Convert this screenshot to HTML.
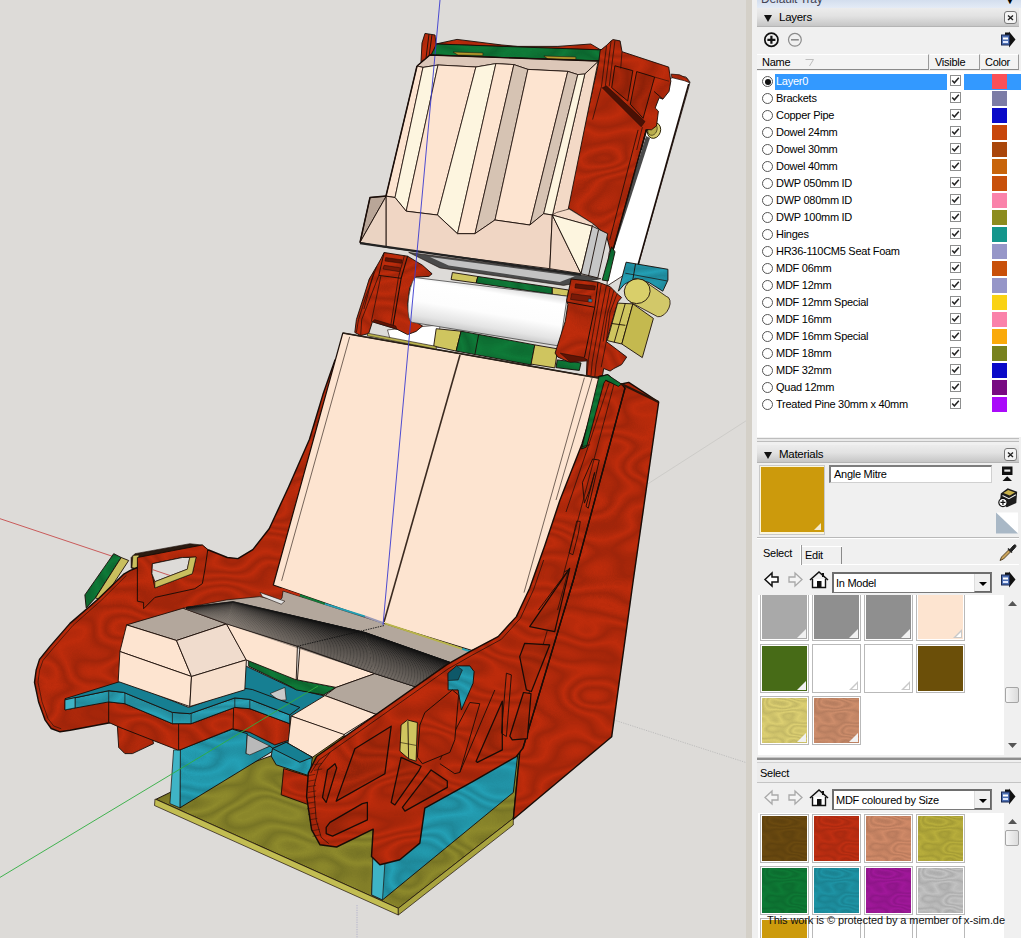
<!DOCTYPE html>
<html><head><meta charset="utf-8"><title>SketchUp</title>
<style>
html,body{margin:0;padding:0;}
body{width:1021px;height:938px;overflow:hidden;position:relative;background:#dddbd8;font-family:"Liberation Sans",sans-serif;font-size:11px;color:#000;}
#vp{position:absolute;left:0;top:0;width:752px;height:938px;display:block}
#split{position:absolute;left:746px;top:0;width:6px;height:938px;background:#d4d0c8}
#split2{position:absolute;left:752px;top:0;width:5px;height:938px;background:#f0f0f0}
#panel{letter-spacing:-.27px;position:absolute;left:757px;top:0;width:264px;height:938px;background:#f0f0f0;overflow:hidden}
#panel *{box-sizing:border-box}
.abs{position:absolute}
.tray{left:0;top:0;width:264px;height:8px;background:linear-gradient(#d3deee,#e4ebf6);overflow:hidden}
.hdr{left:0;width:262px;height:19px;background:linear-gradient(#ececec 0%,#e2e2e2 45%,#c6c6c6 100%);border-bottom:1px solid #b4b4b4}
.hdr span{position:absolute;left:22px;top:3px;font-size:11.5px;}
.hdr b{position:absolute;left:7px;top:7px;width:0;height:0;border-left:4.5px solid transparent;border-right:4.5px solid transparent;border-top:7px solid #111}
.xbtn{position:absolute;left:247px;top:3px;width:13px;height:13px;border:1px solid #777;border-radius:3px;background:#f4f4f4}
.xbtn svg{position:absolute;left:2px;top:2px}
.colh{top:54px;height:16px;background:#f3f3f3;border-top:1px solid #fff;border-bottom:1px solid #8a8a8a;border-right:1px solid #9a9a9a}
.colh span{position:absolute;top:1px;left:5px}
#list{left:0px;top:71px;width:264px;height:366px;background:#fff;overflow:hidden}
.row{position:absolute;left:0;width:264px;height:17px}
.row .hl{position:absolute;left:18px;top:1px;width:246px;height:16px;background:#3399ff}
.row .rad{position:absolute;left:5px;top:3px;width:11px;height:11px;border:1px solid #555;border-radius:50%;background:#fff}
.row .rad.on::after{content:"";position:absolute;left:1.5px;top:1.5px;width:6px;height:6px;border-radius:50%;background:#111}
.row .nm{position:absolute;left:19px;top:2px;white-space:nowrap;}
.row .nm.sel{color:#fff}
.row .cb{position:absolute;left:193px;top:2px;width:11px;height:11px;border:1px solid #8e8f8f;background:#fff;box-shadow:0 0 0 3px #fff}
.row .cb svg{position:absolute;left:-1px;top:-1px}
.row .sw{position:absolute;left:235px;top:1px;width:15px;height:15px}
.swl{background:#fff}
.sws{position:absolute;width:49px;height:49px;border:1px solid #b9b9b9;background:#fff;padding:0}
.sws i{position:absolute;left:1px;top:1px;right:1px;bottom:1px;display:block}
.sws u{position:absolute;right:2px;bottom:2px;width:0;height:0;border-left:9px solid transparent;border-bottom:9px solid #f1f1f1}
.sws u.o{border-bottom-color:#c9c9c9}
.sws u.o::after{content:"";position:absolute;left:-6px;top:3px;width:0;height:0;border-left:5px solid transparent;border-bottom:5px solid #fff}
.dd{background:#fff;border:1px solid #7a7a7a;border-top:2px solid #6e6e6e;border-left:2px solid #6e6e6e}
.dd span{position:absolute;left:2px;top:3px;white-space:nowrap;}
.dd em{position:absolute;right:0;top:0;width:17px;bottom:0;background:#f0f0f0;border-right:1px solid #666;border-bottom:1px solid #666;border-left:1px solid #ddd}
.dd em::after{content:"";position:absolute;left:4px;top:8px;border-left:4px solid transparent;border-right:4px solid transparent;border-top:4px solid #000}
.sb{background:#f0f0f0}
.thumb{position:absolute;left:1px;width:14px;border:1px solid #a5a5a5;border-radius:2px;background:linear-gradient(90deg,#f6f6f6,#dcdcdc)}
</style></head><body>
<svg id="vp" width="752" height="938" viewBox="0 0 752 938">
<rect width="752" height="938" fill="#dddbd8"/>
<defs><filter id="wood" x="-10%" y="-10%" width="120%" height="120%" color-interpolation-filters="sRGB">
<feTurbulence type="fractalNoise" baseFrequency="0.011 0.019" numOctaves="2" seed="11" result="n"/>
<feComponentTransfer in="n" result="b"><feFuncR type="table" tableValues="0 0.16 0 0.16 0 0.16 0 0.16 0 0.16 0 0.16 0 0.16 0 0.16"/></feComponentTransfer>
<feColorMatrix in="b" type="matrix" values="0 0 0 0 0  0 0 0 0 0  0 0 0 0 0  1 0 0 0 0" result="d"/>
<feComposite in="d" in2="SourceAlpha" operator="in" result="dd"/>
<feMerge><feMergeNode in="SourceGraphic"/><feMergeNode in="dd"/></feMerge>
</filter>
<filter id="woods" x="0" y="0" width="100%" height="100%" color-interpolation-filters="sRGB">
<feTurbulence type="fractalNoise" baseFrequency="0.03 0.05" numOctaves="2" seed="5" result="n"/>
<feComponentTransfer in="n" result="b"><feFuncR type="table" tableValues="0 0.11 0 0.11 0 0.11 0 0.11 0 0.11 0 0.11 0 0.11 0 0.11"/></feComponentTransfer>
<feColorMatrix in="b" type="matrix" values="0 0 0 0 0  0 0 0 0 0  0 0 0 0 0  1 0 0 0 0" result="d"/>
<feComposite in="d" in2="SourceAlpha" operator="in" result="dd"/>
<feMerge><feMergeNode in="SourceGraphic"/><feMergeNode in="dd"/></feMerge>
</filter></defs>
<polyline points="0,518.7 128,561.5" fill="none" stroke="#c43a3a" stroke-width="0.8" stroke-linejoin="round"/>
<polyline points="645,485.7 752,417" fill="none" stroke="#cbc9c6" stroke-width="0.9" stroke-linejoin="round"/>
<polyline points="614,720 752,764.5" fill="none" stroke="#b5b5b5" stroke-width="0.8" stroke-linejoin="round" stroke-dasharray="1.2 1.2"/>
<polyline points="357,905 357,938" fill="none" stroke="#a9a9c9" stroke-width="0.8" stroke-linejoin="round" stroke-dasharray="1.2 1.2"/>
<polygon points="656,100 668,80 676,75.5 686,77 690,82 688.5,88 638,266 607,286 609,253" fill="#ffffff" stroke="#1a0d08" stroke-width="0.8" stroke-linejoin="round"/>
<polygon points="436.0,44.0 457.0,39.4 501.9,45.0 517.9,46.4 557.9,46.4 590.8,44.0 599.8,49.4 604.8,50.4" fill="#be2c0c" stroke="#1a0d08" stroke-width="0.9" stroke-linejoin="round" filter="url(#wood)"/>
<polygon points="436.0,44.0 604.8,50.0 598.8,61.0 431.0,55.0" fill="#0f7a38" stroke="#1a0d08" stroke-width="0.9" stroke-linejoin="round" filter="url(#wood)"/>
<polygon points="453.0,52.0 482.9,53.0 482.9,55.4 458.0,55.0" fill="#b59a2c" stroke="#1a0d08" stroke-width="0.5" stroke-linejoin="round"/>
<polygon points="543.9,56.0 575.8,57.0 575.8,59.4 547.9,59.0" fill="#b59a2c" stroke="#1a0d08" stroke-width="0.5" stroke-linejoin="round"/>
<polygon points="425.0,33.4 435.0,35.0 436.0,45.0 431.0,55.0 421.0,62.0 422.0,43.0" fill="#be2c0c" stroke="#1a0d08" stroke-width="0.9" stroke-linejoin="round" filter="url(#wood)"/>
<polyline points="429.0,34.0 426.0,58.0" fill="none" stroke="#1a0d08" stroke-width="0.9" stroke-linejoin="round"/>
<polyline points="432.0,34.6 429.0,56.6" fill="none" stroke="#1a0d08" stroke-width="0.9" stroke-linejoin="round"/>
<polygon points="671.2,74.1 679.5,74.8 687.2,78.6 689.5,82.7 684.7,80.8 671.9,77.6" fill="#be2c0c" stroke="#1a0d08" stroke-width="0.7" stroke-linejoin="round" filter="url(#wood)"/>
<polyline points="688.7,84 638,265" fill="none" stroke="#1a0d08" stroke-width="1.5" stroke-linejoin="round"/>
<ellipse cx="654" cy="130.5" rx="6.5" ry="8" transform="rotate(20 654 130.5)" fill="#d4c96a" stroke="#2a2208" stroke-width="0.9"/>
<ellipse cx="652.5" cy="129.5" rx="4.5" ry="6" transform="rotate(20 652.5 129.5)" fill="#b9ad4c" stroke="#2a2208" stroke-width="0.6"/>
<polygon points="646,136 650,138 613.1,252 611,250" fill="#4a4a4a"/>
<polygon points="598.8,61.6 600.2,50.5 606.6,45.3 611.1,40.9 613.0,39.6 620.1,40.9 622.0,51.7 668.7,67.1 670.8,81.2 669.0,91.4 662.9,99.1 659.1,97.8 655.2,108.0 658.4,111.2 656.5,125.9 651.4,129.8 646.3,129.5 613.1,249.8 610.8,252.1 606.4,235.5 593.1,223.8 569.1,208.5 565.5,213.1" fill="#be2c0c" stroke="#1a0d08" stroke-width="0.9" stroke-linejoin="round" filter="url(#wood)"/>
<polygon points="614.9,65.8 632.8,70.7 627.7,101.0 611.7,87.6" fill="#a8270a" stroke="#1a0d08" stroke-width="0.9" stroke-linejoin="round" filter="url(#wood)"/>
<polygon points="636.7,71.6 654.6,77.1 643.1,118.3 630.3,104.2" fill="#a8270a" stroke="#1a0d08" stroke-width="0.9" stroke-linejoin="round" filter="url(#wood)"/>
<polygon points="602.2,87.8 606.6,86.0 645.0,121.5 641.2,126.8" fill="#4a1004" stroke="#1a0d08" stroke-width="0.6" stroke-linejoin="round"/>
<polyline points="606.6,45.3 601.5,86.3 592.6,119.5" fill="none" stroke="#1a0d08" stroke-width="0.7" stroke-linejoin="round"/>
<polyline points="611.1,40.9 605.3,86.3" fill="none" stroke="#1a0d08" stroke-width="0.7" stroke-linejoin="round"/>
<polyline points="614.9,40.9 609.2,86.3" fill="none" stroke="#1a0d08" stroke-width="0.7" stroke-linejoin="round"/>
<polyline points="622.0,51.7 620.7,68.4" fill="none" stroke="#1a0d08" stroke-width="0.7" stroke-linejoin="round"/>
<polyline points="654.0,91.4 662.9,99.1" fill="none" stroke="#1a0d08" stroke-width="0.9" stroke-linejoin="round"/>
<polyline points="654.6,77.1 669.0,81.2" fill="none" stroke="#1a0d08" stroke-width="0.6" stroke-linejoin="round"/>
<polyline points="646.3,129.5 641.2,150.0" fill="none" stroke="#1a0d08" stroke-width="1.2" stroke-linejoin="round"/>
<polyline points="642.4,127.2 636.7,150.0" fill="none" stroke="#1a0d08" stroke-width="0.7" stroke-linejoin="round"/>
<polyline points="638.1,129.9 609.8,239.8" fill="none" stroke="#1a0d08" stroke-width="0.8" stroke-linejoin="round"/>
<polyline points="646.4,129.9 613.1,249.8" fill="none" stroke="#1a0d08" stroke-width="1.4" stroke-linejoin="round"/>
<polygon points="417.0,66.0 430.0,55.0 598.8,61.0 584.8,74.0 577.8,74.6 567.8,71.4 527.9,69.4 513.9,64.6 495.9,63.6 475.9,67.0 438.0,65.0 423.0,67.4" fill="#dcc7b8" stroke="#1a0d08" stroke-width="0.9" stroke-linejoin="round"/>
<polygon points="584.8,74.0 598.1,61.6 568.1,209.8 552.5,215" fill="#f3d9c6" stroke="#1a0d08" stroke-width="0.9" stroke-linejoin="round"/>
<polygon points="417.0,66.0 423.0,67.4 395,197.5 386,196" fill="#fde4d0" stroke="#1a0d08" stroke-width="0.8" stroke-linejoin="round"/>
<polygon points="423.0,67.4 438.0,65.0 406.2,211.2 395,197.5" fill="#fdf5df" stroke="#1a0d08" stroke-width="0.8" stroke-linejoin="round"/>
<polygon points="438.0,65.0 475.9,67.0 437.5,215 406.2,211.2" fill="#fde4d0" stroke="#1a0d08" stroke-width="0.8" stroke-linejoin="round"/>
<polygon points="475.9,67.0 495.9,63.6 457.5,233.7 437.5,215" fill="#fdf5df" stroke="#1a0d08" stroke-width="0.8" stroke-linejoin="round"/>
<polygon points="495.9,63.6 513.9,64.6 475,233.7 457.5,233.7" fill="#fde4d0" stroke="#1a0d08" stroke-width="0.8" stroke-linejoin="round"/>
<polygon points="513.9,64.6 527.9,69.4 495,220 475,233.7" fill="#d6c3b3" stroke="#1a0d08" stroke-width="0.8" stroke-linejoin="round"/>
<polygon points="527.9,69.4 567.8,71.4 530,225 495,220" fill="#fde4d0" stroke="#1a0d08" stroke-width="0.8" stroke-linejoin="round"/>
<polygon points="567.8,71.4 577.8,74.6 543.7,213.7 530,225" fill="#d6c3b3" stroke="#1a0d08" stroke-width="0.8" stroke-linejoin="round"/>
<polygon points="577.8,74.6 584.8,74.0 552.5,215 543.7,213.7" fill="#fdf5df" stroke="#1a0d08" stroke-width="0.8" stroke-linejoin="round"/>
<polygon points="552.3,215 556.5,212.5 569,209 593.5,224 592.3,226.2" fill="#f3d9c6" stroke="#1a0d08" stroke-width="0.6" stroke-linejoin="round"/>
<polygon points="370.0,197.5 386.2,196.2 360.0,242.4" fill="#b9a698" stroke="#1a0d08" stroke-width="0.9" stroke-linejoin="round"/>
<polygon points="386.2,196.2 386.2,247.4 360.0,242.4" fill="#ead3c2" stroke="#1a0d08" stroke-width="0.9" stroke-linejoin="round"/>
<polygon points="386.2,196.2 395.0,197.5 406.2,211.2 437.4,215.0 457.4,233.7 474.9,233.7 494.9,220.0 529.8,225.0 543.6,213.7 552.3,215.0 549.8,268.7 386.2,247.4" fill="#f0d6c4" stroke="#1a0d08" stroke-width="0.9" stroke-linejoin="round"/>
<polygon points="552.3,215.0 549.8,268.7 581.0,273.7" fill="#f0d6c4" stroke="#1a0d08" stroke-width="0.9" stroke-linejoin="round"/>
<polygon points="552.3,215.0 592.3,226.2 581.0,273.7" fill="#fdf5df" stroke="#1a0d08" stroke-width="0.9" stroke-linejoin="round"/>
<polygon points="581.0,273.7 592.3,226.2 607.7,233.7 597.8,277.9" fill="#c6c6c6" stroke="#1a0d08" stroke-width="0.9" stroke-linejoin="round"/>
<polyline points="598.5,230.0 588.5,276.2" fill="none" stroke="#1a0d08" stroke-width="0.9" stroke-linejoin="round"/>
<polygon points="408.7,252.4 581.0,274.9 601.0,278.7 563.5,285.4 439.9,267.9" fill="#4a4a4a" stroke="#1a0d08" stroke-width="0.6" stroke-linejoin="round"/>
<polygon points="429.9,256.9 574.8,276.2 559.8,281.9 448.7,265.4" fill="#c2c2c2"/>
<polyline points="360.0,243.2 581.0,274.7" fill="none" stroke="#222" stroke-width="2.2" stroke-linejoin="round"/>
<polygon points="387.5,329.9 439.9,324.9 438.7,347.4 390.0,338.7" fill="#ffffff" stroke="#1a0d08" stroke-width="0.6" stroke-linejoin="round"/>
<polygon points="452.4,272.5 477.9,276.5 476.1,283.0 451.1,279.5" fill="#cfc55f" stroke="#1a0d08" stroke-width="0.9" stroke-linejoin="round"/>
<polygon points="477.9,276.5 552.3,287.5 552.3,294.2 476.1,283.0" fill="#0f7a38" stroke="#1a0d08" stroke-width="0.9" stroke-linejoin="round" filter="url(#wood)"/>
<polygon points="552.3,287.5 568.5,290.0 567.8,296.4 552.3,294.2" fill="#cfc55f" stroke="#1a0d08" stroke-width="0.9" stroke-linejoin="round"/>
<polygon points="436.2,328.7 461.1,331.2 456.1,351.1 433.7,346.1" fill="#cfc55f" stroke="#1a0d08" stroke-width="0.9" stroke-linejoin="round"/>
<polygon points="461.1,331.2 534.8,344.9 531.1,364.9 456.1,351.1" fill="#0f7a38" stroke="#1a0d08" stroke-width="0.9" stroke-linejoin="round" filter="url(#wood)"/>
<polyline points="478.6,334.9 474.9,354.4" fill="none" stroke="#1a0d08" stroke-width="0.9" stroke-linejoin="round"/>
<polygon points="534.8,344.9 557.8,348.9 554.8,367.9 531.1,364.1" fill="#cfc55f" stroke="#1a0d08" stroke-width="0.9" stroke-linejoin="round"/>
<polygon points="557.3,359.9 581.0,362.9 579.3,370.4 556.0,367.6" fill="#0f7a38" stroke="#1a0d08" stroke-width="0.9" stroke-linejoin="round" filter="url(#wood)"/>
<polygon points="384.1,252.5 407.6,256.2 422.5,265.3 432.1,273.8 428.9,276.4 416.1,277.0 409.7,287.6 407.6,304.7 409.7,318.6 422.5,326.0 416.1,331.4 407.6,334.6 396.9,329.2 372.4,321.8 368.7,333.5 360.7,335.6 354.8,332.4 356.4,319.6 363.9,296.2 369.2,279.1 376.7,266.3 380.9,258.9" fill="#be2c0c" stroke="#1a0d08" stroke-width="0.9" stroke-linejoin="round" filter="url(#wood)"/>
<polyline points="407.6,256.2 401.2,278.0 392.6,328.2" fill="none" stroke="#1a0d08" stroke-width="1.1" stroke-linejoin="round"/>
<polyline points="404.4,255.7 398.5,277.0 390.5,327.1" fill="none" stroke="#1a0d08" stroke-width="0.7" stroke-linejoin="round"/>
<polyline points="384.1,252.5 378.8,275.4 401.2,278.3" fill="none" stroke="#1a0d08" stroke-width="0.9" stroke-linejoin="round"/>
<polyline points="378.8,275.4 361.7,319.6 360.7,335.6" fill="none" stroke="#1a0d08" stroke-width="0.7" stroke-linejoin="round"/>
<polyline points="380.9,275.9 371.3,321.8" fill="none" stroke="#1a0d08" stroke-width="0.7" stroke-linejoin="round"/>
<polyline points="376.7,266.3 366.0,296.2 358.5,319.6 356.4,332.4" fill="none" stroke="#1a0d08" stroke-width="0.7" stroke-linejoin="round"/>
<polyline points="374.0,271.7 363.9,309.0" fill="none" stroke="#1a0d08" stroke-width="0.7" stroke-linejoin="round"/>
<polygon points="385.7,257.6 402.2,259.9 401.4,263.3 385.0,261.0" fill="#5e1405" stroke="#1a0d08" stroke-width="0.5" stroke-linejoin="round"/>
<polygon points="384.1,265.3 400.6,267.9 399.6,271.7 383.0,269.0" fill="#7a1a07" stroke="#1a0d08" stroke-width="0.5" stroke-linejoin="round"/>
<polygon points="372.4,321.8 396.9,329.2 395.8,326.0 374.5,319.6" fill="#5e1405" stroke="#1a0d08" stroke-width="0.5" stroke-linejoin="round"/>
<defs><linearGradient id="cyl" gradientUnits="userSpaceOnUse" x1="492" y1="287" x2="484" y2="334"><stop offset="0" stop-color="#e6e6e6"/><stop offset="0.12" stop-color="#ffffff"/><stop offset="0.55" stop-color="#fdfdfd"/><stop offset="0.85" stop-color="#e4e4e4"/><stop offset="1" stop-color="#c9c9c9"/></linearGradient></defs>
<path d="M414.9,277.5 L567.3,296.2 L559.8,346.1 L412.4,322.4 A6.4,23.5 7 0 1 414.9,277.5Z" fill="url(#cyl)" stroke="#333" stroke-width="0.7"/>
<polygon points="615.0,251.9 608.2,280.9 602.2,280.1 611.6,246.8" fill="#0f7a38" stroke="#1a0d08" stroke-width="0.9" stroke-linejoin="round" filter="url(#wood)"/>
<polygon points="626.1,262.2 667.9,269.3 667.9,280.1 662.8,291.2 649.1,282.6 635.5,278.4 624.4,284.3 618.4,291.2" fill="#24a0b5" stroke="#1a0d08" stroke-width="0.9" stroke-linejoin="round" filter="url(#wood)"/>
<polyline points="635.5,263.9 632.9,279.2" fill="none" stroke="#1a0d08" stroke-width="0.9" stroke-linejoin="round"/>
<polyline points="625.3,273.2 667.0,280.9" fill="none" stroke="#1a0d08" stroke-width="0.7" stroke-linejoin="round"/>
<polygon points="571.1,279.0 598.0,282.1 610.1,286.6 617.1,293.7 621.6,297.5 617.8,302.0 614.8,312.2 610.4,327.5 606.3,341.6 626.7,357.0 621.6,364.6 613.9,368.5 610.1,371.0 603.7,368.5 602.4,376.1 593.5,377.4 586.4,374.9 587.1,359.5 569.2,362.1 557.7,357.0 555.1,353.1 565.3,321.2 567.9,304.5 566.6,300.7" fill="#be2c0c" stroke="#1a0d08" stroke-width="0.9" stroke-linejoin="round" filter="url(#wood)"/>
<polyline points="566.6,302.0 594.8,307.3 598.0,282.1" fill="none" stroke="#1a0d08" stroke-width="1.0" stroke-linejoin="round"/>
<polyline points="594.8,307.3 584.5,357.0" fill="none" stroke="#1a0d08" stroke-width="1.0" stroke-linejoin="round"/>
<polyline points="601.2,284.1 597.3,308.4 588.4,359.5 587.1,374.9" fill="none" stroke="#1a0d08" stroke-width="0.7" stroke-linejoin="round"/>
<polyline points="606.3,286.0 601.2,312.2 592.2,362.1 590.9,376.1" fill="none" stroke="#1a0d08" stroke-width="0.7" stroke-linejoin="round"/>
<polyline points="610.1,287.9 605.0,314.8 596.0,364.6 594.8,376.8" fill="none" stroke="#1a0d08" stroke-width="0.7" stroke-linejoin="round"/>
<polyline points="617.1,293.7 610.1,312.2 606.3,341.6 601.2,367.2" fill="none" stroke="#1a0d08" stroke-width="0.7" stroke-linejoin="round"/>
<polyline points="613.9,290.5 607.5,313.5 603.1,341.6" fill="none" stroke="#1a0d08" stroke-width="0.7" stroke-linejoin="round"/>
<polygon points="575.6,283.8 595.4,286.0 594.8,290.1 574.9,287.9" fill="#5e1405" stroke="#1a0d08" stroke-width="0.5" stroke-linejoin="round"/>
<polygon points="571.7,293.7 590.9,296.2 590.3,302.0 570.5,299.4" fill="#7a1a07" stroke="#1a0d08" stroke-width="0.5" stroke-linejoin="round"/>
<polygon points="588.4,298.8 592.2,299.2 591.9,302.2 588.1,301.8" fill="#3a7a9a" stroke="#1a0d08" stroke-width="0.4" stroke-linejoin="round"/>
<polygon points="560.2,353.1 584.5,357.6 587.1,361.0 570.5,362.3" fill="#5e1405" stroke="#1a0d08" stroke-width="0.5" stroke-linejoin="round"/>
<polygon points="617.6,303.1 632.9,303.9 621.8,344.0 607.3,340.6" fill="#cfc55f" stroke="#1a0d08" stroke-width="0.9" stroke-linejoin="round"/>
<polygon points="632.9,303.9 653.4,318.4 642.3,357.6 621.8,344.0" fill="#c4b94f" stroke="#1a0d08" stroke-width="0.9" stroke-linejoin="round"/>
<polyline points="625.3,303.4 614.2,342.3" fill="none" stroke="#1a0d08" stroke-width="0.9" stroke-linejoin="round"/>
<polyline points="611.6,323.5 625.3,325.3" fill="none" stroke="#1a0d08" stroke-width="0.9" stroke-linejoin="round"/>
<path d="M642.3,279.6 L666.2,296.3 A7,11.2 30 0 1 657.6,316.7 L630.4,302.2 Z" fill="#d2c869" stroke="#1a0d08" stroke-width="0.8"/>
<ellipse cx="637.2" cy="291.2" rx="13" ry="12.3" transform="rotate(-20 637.2 291.2)" fill="#d9cf6a" stroke="#1a0d08" stroke-width="0.8"/>
<polygon points="598.8,376.4 608.2,374.7 615.0,381.5 601.4,399.9 594.6,399.9" fill="#0f7a38" stroke="#1a0d08" stroke-width="0.9" stroke-linejoin="round" filter="url(#wood)"/>
<polygon points="598.8,376.4 608.2,374.7 615,381.5 582,446 578,444" fill="#0f7a38" stroke="#1a0d08" stroke-width="0.9" stroke-linejoin="round" filter="url(#wood)"/>
<polygon points="84.9,594.9 113.7,553.7 121.2,557.5 95.4,597.9 86.2,607.9" fill="#0f7a38" stroke="#1a0d08" stroke-width="0.9" stroke-linejoin="round" filter="url(#wood)"/>
<polygon points="121.2,557.5 128.7,560.5 102.4,600.4 95.4,597.9" fill="#c9bf5e" stroke="#1a0d08" stroke-width="0.9" stroke-linejoin="round"/>
<polygon points="131.1,557.5 134.9,553.7 189.8,543.7 202.3,545.0 207.8,549.5 137.4,560.0 136.9,570.0 131.1,568.0" fill="#2a1a10" stroke="#1a0d08" stroke-width="0.6" stroke-linejoin="round"/>
<polygon points="132.9,555.5 138.9,555.0 137.9,569.0 131.9,567.5" fill="#c9bf5e" stroke="#1a0d08" stroke-width="0.6" stroke-linejoin="round"/>
<polygon points="335,360 322.9,394.6 309.5,439.3 288.6,487 269.2,528.8 252.8,549.6 237.9,558.6 227.3,557.5 208.6,550.0 137.4,567.5 129.9,570.7 123.4,574.4 97.9,599.2 70.0,623.4 50.0,646.4 39.5,659.4 36.2,669.9 34.5,682.3 38.7,702.3 45.0,719.8 51.2,728.5 60.0,731.8 70.0,730.3 109.9,722.8 112.4,694.8 179.9,669.9 300,610 360,345" fill="#be2c0c" stroke="#1a0d08" stroke-width="1.4" stroke-linejoin="round" filter="url(#wood)"/>
<polyline points="126.4,575.4 100.9,600.7 73.0,625.4 53.0,648.4 43.0,660.4 39.5,670.3 38.0,682.3 42.0,701.8 48.0,718.6 53.7,726.0 61.2,728.8" fill="none" stroke="#1a0d08" stroke-width="0.6" stroke-linejoin="round"/>
<path fill-rule="evenodd" fill="#be2c0c" filter="url(#wood)" stroke="#1a0d08" stroke-width="0.9" stroke-linejoin="round" d="M137.4,557.5 L202.3,545.0 L207.8,549.5 L204.8,570.0 L202.3,583.7 L194.8,588.7 L154.9,597.4 L143.6,608.7 L143.6,602.4 L137.4,601.2 Z M152.4,563.7 L182.3,557.5 L196.1,557.0 L192.3,573.7 L154.9,587.9 L151.9,573.7 Z"/>
<polygon points="152.4,563.7 182.3,557.5 189.8,557.5 187.3,569.2 154.9,581.7 151.9,573.7" fill="#dddbd8" stroke="#1a0d08" stroke-width="0.8" stroke-linejoin="round"/>
<polyline points="152.5,569.6 170,575.5" fill="none" stroke="#c43a3a" stroke-width="0.8" stroke-linejoin="round"/>
<polygon points="189.8,557.5 196.1,557.0 192.3,573.7 154.9,587.9 154.9,581.7 187.3,569.2" fill="#c9bf5e" stroke="#1a0d08" stroke-width="0.6" stroke-linejoin="round"/>
<polygon points="342.8,333 598.3,378 604,379 585,445 563,501 548,546 540,562 530,595 517,621 497,640 472,650.5 383.2,623.3 273.3,585" fill="#fde4d0" stroke="#1a0d08" stroke-width="1.2" stroke-linejoin="round"/>
<polyline points="460,355 384,622" fill="none" stroke="#3a2a20" stroke-width="1.6" stroke-linejoin="round"/>
<polyline points="342.8,333 598.3,378" fill="none" stroke="#2a2018" stroke-width="1.6" stroke-linejoin="round"/>
<polygon points="367.5,333.2 436.2,346.4 436.2,349.1 367.5,335.9" fill="#b9b24e" stroke="#1a0d08" stroke-width="0.6" stroke-linejoin="round"/>
<polyline points="349.7,336.8 281.6,580.8" fill="none" stroke="#1a0d08" stroke-width="0.6" stroke-linejoin="round"/>
<polyline points="584.4,377.7 524,592.6" fill="none" stroke="#1a0d08" stroke-width="0.6" stroke-linejoin="round"/>
<polyline points="592,378 556,500" fill="none" stroke="#1a0d08" stroke-width="0.6" stroke-linejoin="round"/>
<polygon points="156,799.3 175,790 330,735 520,750 513.3,818.3 398.3,908.3" fill="#8e8a2c" stroke="#1a0d08" stroke-width="0.9" stroke-linejoin="round" filter="url(#wood)"/>
<polygon points="155,799 398.3,908.3 398.3,915 154.5,805.5" fill="#c2bd52" stroke="#1a0d08" stroke-width="0.7" stroke-linejoin="round"/>
<polygon points="398.3,908.3 513.3,818.3 513.3,825 398.3,915" fill="#a8a33e" stroke="#1a0d08" stroke-width="0.7" stroke-linejoin="round"/>
<polygon points="420,801.7 463.3,773.3 518.3,750 513.3,792.5 382.5,899.9 371.7,894.9 376,800" fill="#24a0b5" stroke="#1a0d08" stroke-width="0.9" stroke-linejoin="round" filter="url(#wood)"/>
<polygon points="374.5,800 389,800 382.5,899.9 371.7,894.9" fill="#3fb4c6" stroke="#1a0d08" stroke-width="0.7" stroke-linejoin="round"/>
<polygon points="225.0,664.9 246.2,666.2 293.7,688.6 324.9,696.1 291.2,717.4 287.4,748.6 272.5,748.6 225.0,777.3" fill="#167f92" stroke="#1a0d08" stroke-width="0.9" stroke-linejoin="round"/>
<polygon points="179.9,749.9 232.3,729.2 247.3,733.7 246.1,753.6 269.8,746.1 274.8,749.9 179.9,807.8" fill="#24a0b5" stroke="#1a0d08" stroke-width="0.9" stroke-linejoin="round" filter="url(#wood)"/>
<polygon points="173.6,749.9 180.4,749.9 179.9,807.8 169.9,803.6" fill="#3fb4c6" stroke="#1a0d08" stroke-width="0.7" stroke-linejoin="round"/>
<polygon points="247.3,734.9 269.8,746.1 249.8,754.9 246.1,753.6" fill="#b9b9b9" stroke="#1a0d08" stroke-width="0.6" stroke-linejoin="round"/>
<polygon points="270.0,693.6 284.9,687.4 286.2,699.9 278.7,700.4" fill="#c9c9c9" stroke="#1a0d08" stroke-width="0.6" stroke-linejoin="round"/>
<polygon points="248.7,657.4 294.9,678.6 297.4,679.9 336.1,687.4 323.7,694.9 296.2,689.9 292.4,687.4 248.7,666.2" fill="#0f7a38" stroke="#1a0d08" stroke-width="0.9" stroke-linejoin="round" filter="url(#wood)"/>
<polygon points="117.4,726.2 118.7,747.4 124.9,753.6 132.4,753.6 153.6,743.6 152.4,738.7" fill="#be2c0c" stroke="#1a0d08" stroke-width="0.9" stroke-linejoin="round" filter="url(#wood)"/>
<polygon points="108.7,701.9 124.9,703.7 172.4,723.7 191.1,723.7 234.8,707.4 249.8,708.7 289.8,723.7 289.8,739.9 274.8,744.9 249.8,732.4 232.3,728.7 179.9,749.9 177.4,749.9 119.9,727.4 108.7,722.4" fill="#be2c0c" stroke="#1a0d08" stroke-width="0.9" stroke-linejoin="round" filter="url(#wood)"/>
<polyline points="178.6,723.7 178.6,749.9" fill="none" stroke="#1a0d08" stroke-width="0.9" stroke-linejoin="round"/>
<polyline points="233.6,707.9 233.1,728.7" fill="none" stroke="#1a0d08" stroke-width="0.9" stroke-linejoin="round"/>
<polygon points="65.0,699.9 108.7,690.7 123.7,692.4 172.4,712.4 189.9,713.7 234.8,697.9 249.8,699.4 289.8,714.9 289.8,723.7 249.8,708.7 234.8,707.4 191.1,723.7 172.4,723.7 124.9,703.7 108.7,701.9 65.0,709.9" fill="#2aa4b8" stroke="#1a0d08" stroke-width="0.9" stroke-linejoin="round" filter="url(#wood)"/>
<polygon points="65.0,698.7 121.2,681.2 129.9,683.7 188.6,707.4 243.6,688.2 252.3,689.5 299.8,707.4 289.8,714.9 249.8,699.4 234.8,697.9 189.9,713.7 172.4,712.4 123.7,692.4 108.7,690.7 65.0,699.9" fill="#167f92" stroke="#1a0d08" stroke-width="0.9" stroke-linejoin="round"/>
<polyline points="75.0,697.4 75.0,707.9" fill="none" stroke="#1a0d08" stroke-width="0.7" stroke-linejoin="round"/>
<polyline points="108.7,690.7 108.7,701.9" fill="none" stroke="#1a0d08" stroke-width="0.7" stroke-linejoin="round"/>
<polyline points="124.9,692.7 124.9,703.9" fill="none" stroke="#1a0d08" stroke-width="0.7" stroke-linejoin="round"/>
<polyline points="172.4,712.7 172.4,723.9" fill="none" stroke="#1a0d08" stroke-width="0.7" stroke-linejoin="round"/>
<polyline points="191.1,713.9 191.1,723.7" fill="none" stroke="#1a0d08" stroke-width="0.7" stroke-linejoin="round"/>
<polyline points="234.8,698.2 234.8,707.4" fill="none" stroke="#1a0d08" stroke-width="0.7" stroke-linejoin="round"/>
<polyline points="249.8,699.7 249.8,708.9" fill="none" stroke="#1a0d08" stroke-width="0.7" stroke-linejoin="round"/>
<polygon points="65.0,699.9 75.0,697.7 75.0,707.9 65.0,709.9" fill="#3fb4c6" stroke="#1a0d08" stroke-width="0.7" stroke-linejoin="round"/>
<polyline points="0,877.4 318,686" fill="none" stroke="#2fae3f" stroke-width="0.9" stroke-linejoin="round"/>
<polygon points="126.6,624.9 183.2,608.2 226.5,623.9 176.5,640.5" fill="#b3a79c" stroke="#1a0d08" stroke-width="0.9" stroke-linejoin="round"/>
<polygon points="126.6,624.9 176.5,640.5 191.5,676.5 119.9,651.5" fill="#fde4d0" stroke="#1a0d08" stroke-width="0.9" stroke-linejoin="round"/>
<polygon points="176.5,640.5 226.5,623.9 246.4,659.8 191.5,676.5" fill="#f0dccd" stroke="#1a0d08" stroke-width="0.9" stroke-linejoin="round"/>
<polygon points="119.9,651.5 191.5,676.5 189.8,706.5 118.2,681.5" fill="#fde4d0" stroke="#1a0d08" stroke-width="0.9" stroke-linejoin="round"/>
<polygon points="191.5,676.5 246.4,659.8 244.8,689.8 189.8,706.5" fill="#f7dfcc" stroke="#1a0d08" stroke-width="0.9" stroke-linejoin="round"/>
<polygon points="226.2,623.4 297.4,646.2 296.2,679.9 246.2,659.9" fill="#fde4d0" stroke="#1a0d08" stroke-width="0.9" stroke-linejoin="round"/>
<polygon points="299.9,647.4 374.9,673.6 336.1,687.4 297.4,679.9" fill="#fde4d0" stroke="#1a0d08" stroke-width="0.9" stroke-linejoin="round"/>
<polygon points="374.9,673.6 417.3,687.4 376.1,714.4 324.9,695.6 336.1,687.4" fill="#b3a79c" stroke="#1a0d08" stroke-width="0.9" stroke-linejoin="round"/>
<polygon points="324.9,695.6 376.1,714.4 343.6,734.8 291.2,716.1" fill="#fde4d0" stroke="#1a0d08" stroke-width="0.9" stroke-linejoin="round"/>
<polygon points="291.2,716.1 344.9,734.8 312.4,757.3 287.4,748.6" fill="#fde4d0" stroke="#1a0d08" stroke-width="0.9" stroke-linejoin="round"/>
<polygon points="272.5,748.6 286.2,742.3 312.4,757.3 309.9,776.0 276.2,764.8 271.2,756.1" fill="#24a0b5" stroke="#1a0d08" stroke-width="0.9" stroke-linejoin="round" filter="url(#wood)"/>
<polygon points="272.5,748.6 286.2,742.3 312.4,757.3 299.9,762.3" fill="#167f92" stroke="#1a0d08" stroke-width="0.9" stroke-linejoin="round"/>
<polygon points="283.7,768.6 309.9,776.8 307.4,804.3 281.2,794.8" fill="#be2c0c" stroke="#1a0d08" stroke-width="0.9" stroke-linejoin="round" filter="url(#wood)"/>
<polygon points="183.2,608.2 226.5,599.9 259.8,596.6 278.7,601.2 282,598 283,591 384.8,623.7 466,649.6 474.8,653.7 447.3,669.9 417.3,687.4 374.9,673.6 297.4,646.2 226.5,623.9" fill="#b3a79c" stroke="#1a0d08" stroke-width="0.7" stroke-linejoin="round"/>
<defs><linearGradient id="hg" gradientUnits="userSpaceOnUse" x1="190" y1="0" x2="330" y2="0"><stop offset="0" stop-color="#111" stop-opacity="0.25"/><stop offset="1" stop-color="#111" stop-opacity="1"/></linearGradient></defs>
<polyline points="186.0,607.4 233.0,601.6 364.9,632.4 452.0,663.0" fill="none" stroke="url(#hg)" stroke-width="0.8" stroke-linejoin="round" stroke-opacity="1.00"/>
<polyline points="186.0,607.4 232.99,601.63 364.91,632.45 451.96,663.03" fill="none" stroke="url(#hg)" stroke-width="0.8" stroke-linejoin="round" stroke-opacity="1.00"/>
<polyline points="186.0,607.4 232.97,601.69 364.94,632.56 451.86,663.1" fill="none" stroke="url(#hg)" stroke-width="0.8" stroke-linejoin="round" stroke-opacity="1.00"/>
<polyline points="186.0,607.41 232.95,601.77 364.98,632.72 451.73,663.19" fill="none" stroke="url(#hg)" stroke-width="0.8" stroke-linejoin="round" stroke-opacity="1.00"/>
<polyline points="186.0,607.42 232.92,601.88 365.03,632.93 451.56,663.31" fill="none" stroke="url(#hg)" stroke-width="0.8" stroke-linejoin="round" stroke-opacity="1.00"/>
<polyline points="186.0,607.42 232.88,602.02 365.09,633.17 451.35,663.46" fill="none" stroke="url(#hg)" stroke-width="0.8" stroke-linejoin="round" stroke-opacity="0.99"/>
<polyline points="186.0,607.43 232.83,602.17 365.15,633.45 451.12,663.62" fill="none" stroke="url(#hg)" stroke-width="0.8" stroke-linejoin="round" stroke-opacity="0.99"/>
<polyline points="186.0,607.44 232.79,602.34 365.23,633.76 450.85,663.81" fill="none" stroke="url(#hg)" stroke-width="0.8" stroke-linejoin="round" stroke-opacity="0.99"/>
<polyline points="186.0,607.45 232.73,602.53 365.31,634.11 450.56,664.01" fill="none" stroke="url(#hg)" stroke-width="0.8" stroke-linejoin="round" stroke-opacity="0.99"/>
<polyline points="186.0,607.46 232.67,602.73 365.41,634.49 450.24,664.24" fill="none" stroke="url(#hg)" stroke-width="0.8" stroke-linejoin="round" stroke-opacity="0.98"/>
<polyline points="186.0,607.47 232.61,602.95 365.51,634.9 449.9,664.48" fill="none" stroke="url(#hg)" stroke-width="0.8" stroke-linejoin="round" stroke-opacity="0.98"/>
<polyline points="186.0,607.49 232.54,603.19 365.61,635.34 449.53,664.74" fill="none" stroke="url(#hg)" stroke-width="0.8" stroke-linejoin="round" stroke-opacity="0.98"/>
<polyline points="186.0,607.5 232.46,603.44 365.73,635.81 449.13,665.02" fill="none" stroke="url(#hg)" stroke-width="0.8" stroke-linejoin="round" stroke-opacity="0.98"/>
<polyline points="186.0,607.51 232.38,603.71 365.85,636.3 448.71,665.31" fill="none" stroke="url(#hg)" stroke-width="0.8" stroke-linejoin="round" stroke-opacity="0.97"/>
<polyline points="186.0,607.53 232.3,604.0 365.97,636.83 448.27,665.62" fill="none" stroke="url(#hg)" stroke-width="0.8" stroke-linejoin="round" stroke-opacity="0.97"/>
<polyline points="186.0,607.54 232.21,604.29 366.11,637.38 447.81,665.95" fill="none" stroke="url(#hg)" stroke-width="0.8" stroke-linejoin="round" stroke-opacity="0.96"/>
<polyline points="186.0,607.56 232.12,604.61 366.25,637.96 447.32,666.29" fill="none" stroke="url(#hg)" stroke-width="0.8" stroke-linejoin="round" stroke-opacity="0.96"/>
<polyline points="186.0,607.58 232.03,604.93 366.39,638.56 446.81,666.65" fill="none" stroke="url(#hg)" stroke-width="0.8" stroke-linejoin="round" stroke-opacity="0.96"/>
<polyline points="186.0,607.6 231.93,605.27 366.55,639.19 446.28,667.02" fill="none" stroke="url(#hg)" stroke-width="0.8" stroke-linejoin="round" stroke-opacity="0.95"/>
<polyline points="186.0,607.62 231.83,605.63 366.71,639.84 445.73,667.41" fill="none" stroke="url(#hg)" stroke-width="0.8" stroke-linejoin="round" stroke-opacity="0.95"/>
<polyline points="186.0,607.64 231.72,605.99 366.87,640.52 445.16,667.81" fill="none" stroke="url(#hg)" stroke-width="0.8" stroke-linejoin="round" stroke-opacity="0.94"/>
<polyline points="186.0,607.66 231.61,606.37 367.04,641.22 444.57,668.22" fill="none" stroke="url(#hg)" stroke-width="0.8" stroke-linejoin="round" stroke-opacity="0.94"/>
<polyline points="186.0,607.68 231.49,606.77 367.22,641.95 443.96,668.65" fill="none" stroke="url(#hg)" stroke-width="0.8" stroke-linejoin="round" stroke-opacity="0.93"/>
<polyline points="186.0,607.7 231.38,607.17 367.4,642.7 443.33,669.1" fill="none" stroke="url(#hg)" stroke-width="0.8" stroke-linejoin="round" stroke-opacity="0.93"/>
<polyline points="186.0,607.72 231.25,607.59 367.59,643.47 442.68,669.55" fill="none" stroke="url(#hg)" stroke-width="0.8" stroke-linejoin="round" stroke-opacity="0.92"/>
<polyline points="186.0,607.75 231.13,608.02 367.78,644.26 442.01,670.03" fill="none" stroke="url(#hg)" stroke-width="0.8" stroke-linejoin="round" stroke-opacity="0.91"/>
<polyline points="186.0,607.77 231.0,608.46 367.98,645.08 441.32,670.51" fill="none" stroke="url(#hg)" stroke-width="0.8" stroke-linejoin="round" stroke-opacity="0.91"/>
<polyline points="186.0,607.79 230.87,608.92 368.18,645.92 440.61,671.01" fill="none" stroke="url(#hg)" stroke-width="0.8" stroke-linejoin="round" stroke-opacity="0.90"/>
<polyline points="186.0,607.82 230.73,609.39 368.39,646.78 439.89,671.52" fill="none" stroke="url(#hg)" stroke-width="0.8" stroke-linejoin="round" stroke-opacity="0.90"/>
<polyline points="186.0,607.84 230.59,609.86 368.61,647.67 439.14,672.04" fill="none" stroke="url(#hg)" stroke-width="0.8" stroke-linejoin="round" stroke-opacity="0.89"/>
<polyline points="186.0,607.87 230.45,610.35 368.83,648.57 438.38,672.58" fill="none" stroke="url(#hg)" stroke-width="0.8" stroke-linejoin="round" stroke-opacity="0.88"/>
<polyline points="186.0,607.9 230.3,610.86 369.05,649.5 437.6,673.13" fill="none" stroke="url(#hg)" stroke-width="0.8" stroke-linejoin="round" stroke-opacity="0.88"/>
<polyline points="186.0,607.93 230.15,611.37 369.28,650.45 436.8,673.69" fill="none" stroke="url(#hg)" stroke-width="0.8" stroke-linejoin="round" stroke-opacity="0.87"/>
<polyline points="186.0,607.95 230.0,611.89 369.52,651.42 435.98,674.26" fill="none" stroke="url(#hg)" stroke-width="0.8" stroke-linejoin="round" stroke-opacity="0.86"/>
<polyline points="186.0,607.98 229.84,612.43 369.76,652.41 435.15,674.85" fill="none" stroke="url(#hg)" stroke-width="0.8" stroke-linejoin="round" stroke-opacity="0.85"/>
<polyline points="186.0,608.01 229.68,612.98 370.0,653.42 434.3,675.45" fill="none" stroke="url(#hg)" stroke-width="0.8" stroke-linejoin="round" stroke-opacity="0.85"/>
<polyline points="186.0,608.04 229.52,613.53 370.25,654.45 433.43,676.06" fill="none" stroke="url(#hg)" stroke-width="0.8" stroke-linejoin="round" stroke-opacity="0.84"/>
<polyline points="186.0,608.07 229.36,614.1 370.51,655.5 432.54,676.68" fill="none" stroke="url(#hg)" stroke-width="0.8" stroke-linejoin="round" stroke-opacity="0.83"/>
<polyline points="186.0,608.1 229.19,614.68 370.77,656.57 431.64,677.32" fill="none" stroke="url(#hg)" stroke-width="0.8" stroke-linejoin="round" stroke-opacity="0.82"/>
<polyline points="186.0,608.14 229.01,615.27 371.03,657.66 430.72,677.96" fill="none" stroke="url(#hg)" stroke-width="0.8" stroke-linejoin="round" stroke-opacity="0.82"/>
<polyline points="186.0,608.17 228.84,615.88 371.3,658.78 429.79,678.62" fill="none" stroke="url(#hg)" stroke-width="0.8" stroke-linejoin="round" stroke-opacity="0.81"/>
<polyline points="186.0,608.2 228.66,616.49 371.58,659.91 428.83,679.29" fill="none" stroke="url(#hg)" stroke-width="0.8" stroke-linejoin="round" stroke-opacity="0.80"/>
<polyline points="186.0,608.23 228.48,617.11 371.86,661.06 427.86,679.97" fill="none" stroke="url(#hg)" stroke-width="0.8" stroke-linejoin="round" stroke-opacity="0.79"/>
<polyline points="186.0,608.27 228.29,617.74 372.14,662.23 426.88,680.66" fill="none" stroke="url(#hg)" stroke-width="0.8" stroke-linejoin="round" stroke-opacity="0.78"/>
<polyline points="186.0,608.3 228.11,618.39 372.43,663.41 425.88,681.37" fill="none" stroke="url(#hg)" stroke-width="0.8" stroke-linejoin="round" stroke-opacity="0.77"/>
<polyline points="186.0,608.34 227.92,619.04 372.72,664.62 424.86,682.08" fill="none" stroke="url(#hg)" stroke-width="0.8" stroke-linejoin="round" stroke-opacity="0.77"/>
<polyline points="186.0,608.37 227.72,619.7 373.02,665.85 423.83,682.81" fill="none" stroke="url(#hg)" stroke-width="0.8" stroke-linejoin="round" stroke-opacity="0.76"/>
<polyline points="186.0,608.41 227.53,620.38 373.32,667.09 422.78,683.55" fill="none" stroke="url(#hg)" stroke-width="0.8" stroke-linejoin="round" stroke-opacity="0.75"/>
<polyline points="186.0,608.45 227.33,621.06 373.63,668.36 421.71,684.3" fill="none" stroke="url(#hg)" stroke-width="0.8" stroke-linejoin="round" stroke-opacity="0.74"/>
<polyline points="186.0,608.48 227.12,621.76 373.94,669.64 420.63,685.06" fill="none" stroke="url(#hg)" stroke-width="0.8" stroke-linejoin="round" stroke-opacity="0.73"/>
<polyline points="186.0,608.52 226.92,622.46 374.25,670.94 419.54,685.83" fill="none" stroke="url(#hg)" stroke-width="0.8" stroke-linejoin="round" stroke-opacity="0.72"/>
<polyline points="186.0,608.56 226.71,623.18 374.58,672.26 418.43,686.61" fill="none" stroke="url(#hg)" stroke-width="0.8" stroke-linejoin="round" stroke-opacity="0.71"/>
<polyline points="186.0,608.6 226.5,623.9 374.9,673.6 417.3,687.4" fill="none" stroke="url(#hg)" stroke-width="0.8" stroke-linejoin="round" stroke-opacity="0.70"/>
<polyline points="297.4,646.2 384.8,625.4" fill="none" stroke="#111" stroke-width="0.9" stroke-linejoin="round" stroke-dasharray="1.5 1"/>
<polygon points="260.0,592.5 284.9,601.2 281.2,604.2 262.5,596.7" fill="#e3e3e3" stroke="#1a0d08" stroke-width="0.6" stroke-linejoin="round"/>
<polyline points="281.2,588.9 299.9,595.2" fill="none" stroke="#be2c0c" stroke-width="2" stroke-linejoin="round"/>
<polyline points="299.9,595.2 324.9,603.9" fill="none" stroke="#0f7a38" stroke-width="2" stroke-linejoin="round"/>
<polyline points="324.9,603.9 364.9,616.4" fill="none" stroke="#24a0b5" stroke-width="2" stroke-linejoin="round"/>
<polyline points="364.9,616.4 383.6,623.2" fill="none" stroke="#9a9ab5" stroke-width="2" stroke-linejoin="round"/>
<polyline points="384.8,623.4 462.3,648.9" fill="none" stroke="#b9b54a" stroke-width="2" stroke-linejoin="round"/>
<polyline points="462.3,648.9 472.3,652" fill="none" stroke="#24a0b5" stroke-width="2" stroke-linejoin="round"/>
<polygon points="621.5,384 628.7,382.4 658.7,402 633.3,580 611.7,736.7 513.3,819.3 520,750 573.3,580 612,420" fill="#be2c0c" stroke="#1a0d08" stroke-width="1.4" stroke-linejoin="round" filter="url(#wood)"/>
<polygon points="608.2,381.5 621.5,384 625,388 573.3,580 523,748 516.4,756.5 473.1,781.4 424.8,808.1 419.8,843.1 399.8,859.7 379.9,864.7 371.5,856.4 373.2,829.1 336.6,847.0 319.9,844.7 311.6,829.7 306.6,796.4 308.3,773.1 316.6,756.5 446.5,664.9 469.8,651.6 498.1,636.6 516.4,616.6 529.7,588.3 539.7,560.0 545,545 560,500 582,444 602,378" fill="#be2c0c" stroke="#1a0d08" stroke-width="1.4" stroke-linejoin="round" filter="url(#wood)"/>
<polyline points="625,388 573.3,580 523,748" fill="none" stroke="#1a0d08" stroke-width="1.2" stroke-linejoin="round"/>
<polyline points="614,384 562,580 527,700" fill="none" stroke="#1a0d08" stroke-width="0.7" stroke-linejoin="round"/>
<polyline points="310.6,773.1 319.3,759.8 448.1,668.9 471.4,655.6 501.4,639.3 520.4,618.3 533.7,589.3 543.7,560.0" fill="none" stroke="#1a0d08" stroke-width="0.7" stroke-linejoin="round"/>
<polyline points="330.0,752.4 318.7,767.4 313.7,787.4 316.2,819.9 321.2,837.3 328.7,843.6" fill="none" stroke="#1a0d08" stroke-width="0.7" stroke-linejoin="round"/>
<polyline points="313.6,764.9 321.8,763.4" fill="none" stroke="#1a0d08" stroke-width="0.5" stroke-linejoin="round"/>
<polyline points="314.0,770.4 322.2,768.9" fill="none" stroke="#1a0d08" stroke-width="0.5" stroke-linejoin="round"/>
<polyline points="306.9,775.9 315.1,774.4" fill="none" stroke="#1a0d08" stroke-width="0.5" stroke-linejoin="round"/>
<polyline points="307.2,781.4 315.5,779.9" fill="none" stroke="#1a0d08" stroke-width="0.5" stroke-linejoin="round"/>
<polyline points="307.6,786.9 315.9,785.4" fill="none" stroke="#1a0d08" stroke-width="0.5" stroke-linejoin="round"/>
<polyline points="308.0,792.4 316.2,790.9" fill="none" stroke="#1a0d08" stroke-width="0.5" stroke-linejoin="round"/>
<polyline points="307.6,797.9 315.9,796.4" fill="none" stroke="#1a0d08" stroke-width="0.5" stroke-linejoin="round"/>
<polyline points="307.2,803.4 315.5,801.9" fill="none" stroke="#1a0d08" stroke-width="0.5" stroke-linejoin="round"/>
<polyline points="306.9,808.9 315.1,807.4" fill="none" stroke="#1a0d08" stroke-width="0.5" stroke-linejoin="round"/>
<polyline points="308.0,814.4 316.2,812.9" fill="none" stroke="#1a0d08" stroke-width="0.5" stroke-linejoin="round"/>
<polyline points="309.1,819.9 317.4,818.4" fill="none" stroke="#1a0d08" stroke-width="0.5" stroke-linejoin="round"/>
<polyline points="310.2,825.4 318.5,823.9" fill="none" stroke="#1a0d08" stroke-width="0.5" stroke-linejoin="round"/>
<polyline points="311.4,830.8 319.6,829.4" fill="none" stroke="#1a0d08" stroke-width="0.5" stroke-linejoin="round"/>
<polyline points="312.5,836.3 320.7,834.8" fill="none" stroke="#1a0d08" stroke-width="0.5" stroke-linejoin="round"/>
<polygon points="322.5,797.4 327.5,769.9 335.0,763.7 336.7,767.9 326.2,802.4" fill="#b02a0b" stroke="#1a0d08" stroke-width="1.25" stroke-linejoin="round" filter="url(#wood)"/>
<polygon points="336.2,801.1 354.9,748.7 391.2,726.2 384.9,773.7" fill="#b02a0b" stroke="#1a0d08" stroke-width="1.25" stroke-linejoin="round" filter="url(#wood)"/>
<polygon points="326.2,827.4 330.0,822.4 362.4,803.6 367.4,802.4 367.4,819.9 332.5,836.1 326.2,833.6" fill="#b02a0b" stroke="#1a0d08" stroke-width="1.25" stroke-linejoin="round" filter="url(#wood)"/>
<polygon points="391.2,802.4 401.1,757.4 421.1,766.2 418.6,771.2 394.9,804.9" fill="#b02a0b" stroke="#1a0d08" stroke-width="1.25" stroke-linejoin="round" filter="url(#wood)"/>
<polygon points="402.4,807.4 431.1,769.9 447.3,781.1 447.3,787.4 404.9,811.1" fill="#b02a0b" stroke="#1a0d08" stroke-width="1.25" stroke-linejoin="round" filter="url(#wood)"/>
<polygon points="476.1,761.2 502.3,701.2 502.3,749.9 477.3,762.4" fill="#b02a0b" stroke="#1a0d08" stroke-width="1.25" stroke-linejoin="round" filter="url(#wood)"/>
<polygon points="509.8,736.2 523.5,692.5 531.0,693.7 527.3,738.7 512.3,739.9" fill="#b02a0b" stroke="#1a0d08" stroke-width="1.25" stroke-linejoin="round" filter="url(#wood)"/>
<polygon points="529.7,626.6 569.7,568.3 554.7,631.6" fill="#b02a0b" stroke="#1a0d08" stroke-width="1.25" stroke-linejoin="round" filter="url(#wood)"/>
<polygon points="519.7,656.6 524.7,643.3 549.7,644.9 531.4,691.5 526.4,689.9" fill="#b02a0b" stroke="#1a0d08" stroke-width="1.25" stroke-linejoin="round" filter="url(#wood)"/>
<polyline points="459.8,772.4 494.8,690.0" fill="none" stroke="#1a0d08" stroke-width="0.9" stroke-linejoin="round"/>
<polyline points="439.9,759.9 469.8,702.5 479.8,703.7 459.8,772.4 454.8,773.7 439.9,763.7" fill="none" stroke="#1a0d08" stroke-width="0.9" stroke-linejoin="round"/>
<polyline points="506.4,673.2 511.4,674.9 506.4,736.5 501.4,733.2 506.4,673.2" fill="none" stroke="#1a0d08" stroke-width="0.9" stroke-linejoin="round"/>
<polygon points="448.1,673.2 456.5,665.9 469.8,665.9 474.1,671.6 473.1,683.2 461.4,709.9 458.1,689.9 448.1,689.9" fill="#24a0b5" stroke="#1a0d08" stroke-width="0.9" stroke-linejoin="round" filter="url(#wood)"/>
<polygon points="448.1,673.2 456.5,665.9 462.4,669.9 458.1,679.9 448.1,680.5" fill="#0e5868" stroke="#1a0d08" stroke-width="0.6" stroke-linejoin="round"/>
<polygon points="401.1,725.0 407.4,720.0 417.4,722.5 416.1,761.2 408.6,758.7 399.9,751.2" fill="#cfc55f" stroke="#1a0d08" stroke-width="0.9" stroke-linejoin="round"/>
<polyline points="407.9,721.2 408.6,758.7" fill="none" stroke="#1a0d08" stroke-width="0.9" stroke-linejoin="round"/>
<polyline points="399.9,742.4 416.1,745.4" fill="none" stroke="#1a0d08" stroke-width="0.6" stroke-linejoin="round"/>
<polygon points="424.9,712.5 452.3,690.0 458.6,695.0 454.8,739.9 449.8,752.4 422.4,763.7 417.4,757.4 419.9,725.0" fill="#be2c0c" stroke="#1a0d08" stroke-width="0.9" stroke-linejoin="round" filter="url(#wood)"/>
<polygon points="598.8,377 607.4,374.7 621.5,384.1 618.4,386.4 605.8,380.1 603.8,383.3 586.5,447 581.5,449" fill="#0f7a38" stroke="#1a0d08" stroke-width="0.9" stroke-linejoin="round" filter="url(#wood)"/>
<polyline points="621.5,384.1 658.5,402" fill="none" stroke="#2a140a" stroke-width="2.2" stroke-linejoin="round"/>
<polyline points="609,383.3 587,450 566,512" fill="none" stroke="#1a0d08" stroke-width="0.7" stroke-linejoin="round"/>
<polyline points="592.6,459.0 599.3,460.1 588.3,508.2 586.0,506.4 594.7,472.4 589.6,490.3 584.4,503.1 582.4,482.6 592.6,459.0" fill="none" stroke="#1a0d08" stroke-width="0.9" stroke-linejoin="round"/>
<polyline points="581.4,446.8 590.1,444.7" fill="none" stroke="#1a0d08" stroke-width="0.7" stroke-linejoin="round"/>
<polyline points="576.8,521.0 580.3,521.5 578.3,533.8 572.9,554.7 569.1,553.0 576.8,521.0" fill="none" stroke="#1a0d08" stroke-width="0.8" stroke-linejoin="round"/>
<polyline points="564.0,572.1 568.6,569.6 538.4,610.0" fill="none" stroke="#1a0d08" stroke-width="0.9" stroke-linejoin="round"/>
<polyline points="568.6,569.6 557.6,610.0" fill="none" stroke="#1a0d08" stroke-width="0.7" stroke-linejoin="round"/>
<polyline points="440,0 383,625" fill="none" stroke="#3a3ad0" stroke-width="0.9" stroke-linejoin="round"/>
<polyline points="417,66 386,196" fill="none" stroke="#1a0d08" stroke-width="1.5" stroke-linejoin="round"/>
<polyline points="417,66 430,55 598.8,61" fill="none" stroke="#1a0d08" stroke-width="1.3" stroke-linejoin="round"/>
<polyline points="386,196 370,197.5 360,242.5" fill="none" stroke="#1a0d08" stroke-width="1.5" stroke-linejoin="round"/>
</svg>
<div id="split"></div><div id="split2"></div>
<div id="panel">
<div class="abs tray"><span style="position:absolute;left:4px;top:-8px;font-size:12px;color:#445">Default Tray</span><span style="position:absolute;left:247px;top:-7px;font-size:12px;font-weight:bold">&#x25BC;</span></div>
<div class="abs hdr" style="top:8px"><b></b><span>Layers</span><div class="xbtn"><svg width="7" height="7" viewBox="0 0 7 7"><path d="M1 1.5L6 6M6 1.5L1 6" stroke="#222" stroke-width="1.4" fill="none"/></svg></div></div>
<svg class="abs" style="left:5px;top:30px" width="48" height="20" viewBox="0 0 48 20"><circle cx="9.4" cy="9.8" r="6.6" fill="none" stroke="#111" stroke-width="1.7"/><path d="M5.4 9.8H13.4M9.4 5.8V13.8" stroke="#111" stroke-width="2.2"/><circle cx="32.9" cy="9.8" r="6.4" fill="none" stroke="#8b8b8b" stroke-width="1.2"/><path d="M29 9.8H36.8" stroke="#8b8b8b" stroke-width="1.6"/></svg>
<svg class="abs" style="left:243px;top:31px" width="16" height="17" viewBox="0 0 16 17"><path d="M5 1.5H9V0.5L15.5 8.5L9 16.5V14H5Z" fill="#111"/><rect x="1.5" y="4" width="8" height="10" fill="#4d6fb3" stroke="#1a2a55" stroke-width="1"/><rect x="3" y="6.5" width="5" height="2" fill="#fff"/><rect x="3" y="10" width="5" height="2" fill="#dfe8ff"/></svg>
<div class="abs colh" style="left:0;width:172px"><span>Name</span><svg style="position:absolute;left:48px;top:4px" width="10" height="8" viewBox="0 0 10 8"><path d="M0.5 0.5H8.5L4.5 7" fill="none" stroke="#bdbdbd" stroke-width="1"/></svg></div>
<div class="abs colh" style="left:173px;width:50px"><span>Visible</span></div>
<div class="abs colh" style="left:224px;width:38px"><span style="left:4px">Color</span></div>
<div class="abs" id="list">
<div class="row" style="top:2px"><i class="hl"></i><i class="rad on"></i><span class="nm sel">Layer0</span><i class="cb"><svg viewBox="0 0 11 11" width="11" height="11"><path d="M2.2 5.4 L4.4 7.8 L8.8 2.8" fill="none" stroke="#222" stroke-width="1.5"/></svg></i><i class="sw" style="background:#fa5057"></i></div>
<div class="row" style="top:19px"><i class="rad"></i><span class="nm">Brackets</span><i class="cb"><svg viewBox="0 0 11 11" width="11" height="11"><path d="M2.2 5.4 L4.4 7.8 L8.8 2.8" fill="none" stroke="#222" stroke-width="1.5"/></svg></i><i class="sw" style="background:#7c7ca6"></i></div>
<div class="row" style="top:36px"><i class="rad"></i><span class="nm">Copper Pipe</span><i class="cb"><svg viewBox="0 0 11 11" width="11" height="11"><path d="M2.2 5.4 L4.4 7.8 L8.8 2.8" fill="none" stroke="#222" stroke-width="1.5"/></svg></i><i class="sw" style="background:#0a0ac8"></i></div>
<div class="row" style="top:53px"><i class="rad"></i><span class="nm">Dowel 24mm</span><i class="cb"><svg viewBox="0 0 11 11" width="11" height="11"><path d="M2.2 5.4 L4.4 7.8 L8.8 2.8" fill="none" stroke="#222" stroke-width="1.5"/></svg></i><i class="sw" style="background:#c8460a"></i></div>
<div class="row" style="top:70px"><i class="rad"></i><span class="nm">Dowel 30mm</span><i class="cb"><svg viewBox="0 0 11 11" width="11" height="11"><path d="M2.2 5.4 L4.4 7.8 L8.8 2.8" fill="none" stroke="#222" stroke-width="1.5"/></svg></i><i class="sw" style="background:#aa460a"></i></div>
<div class="row" style="top:87px"><i class="rad"></i><span class="nm">Dowel 40mm</span><i class="cb"><svg viewBox="0 0 11 11" width="11" height="11"><path d="M2.2 5.4 L4.4 7.8 L8.8 2.8" fill="none" stroke="#222" stroke-width="1.5"/></svg></i><i class="sw" style="background:#c8640a"></i></div>
<div class="row" style="top:104px"><i class="rad"></i><span class="nm">DWP 050mm ID</span><i class="cb"><svg viewBox="0 0 11 11" width="11" height="11"><path d="M2.2 5.4 L4.4 7.8 L8.8 2.8" fill="none" stroke="#222" stroke-width="1.5"/></svg></i><i class="sw" style="background:#c8500a"></i></div>
<div class="row" style="top:121px"><i class="rad"></i><span class="nm">DWP 080mm ID</span><i class="cb"><svg viewBox="0 0 11 11" width="11" height="11"><path d="M2.2 5.4 L4.4 7.8 L8.8 2.8" fill="none" stroke="#222" stroke-width="1.5"/></svg></i><i class="sw" style="background:#fa82aa"></i></div>
<div class="row" style="top:138px"><i class="rad"></i><span class="nm">DWP 100mm ID</span><i class="cb"><svg viewBox="0 0 11 11" width="11" height="11"><path d="M2.2 5.4 L4.4 7.8 L8.8 2.8" fill="none" stroke="#222" stroke-width="1.5"/></svg></i><i class="sw" style="background:#8c8c1e"></i></div>
<div class="row" style="top:155px"><i class="rad"></i><span class="nm">Hinges</span><i class="cb"><svg viewBox="0 0 11 11" width="11" height="11"><path d="M2.2 5.4 L4.4 7.8 L8.8 2.8" fill="none" stroke="#222" stroke-width="1.5"/></svg></i><i class="sw" style="background:#14968c"></i></div>
<div class="row" style="top:172px"><i class="rad"></i><span class="nm">HR36-110CM5 Seat Foam</span><i class="cb"><svg viewBox="0 0 11 11" width="11" height="11"><path d="M2.2 5.4 L4.4 7.8 L8.8 2.8" fill="none" stroke="#222" stroke-width="1.5"/></svg></i><i class="sw" style="background:#9696c8"></i></div>
<div class="row" style="top:189px"><i class="rad"></i><span class="nm">MDF 06mm</span><i class="cb"><svg viewBox="0 0 11 11" width="11" height="11"><path d="M2.2 5.4 L4.4 7.8 L8.8 2.8" fill="none" stroke="#222" stroke-width="1.5"/></svg></i><i class="sw" style="background:#c8500a"></i></div>
<div class="row" style="top:206px"><i class="rad"></i><span class="nm">MDF 12mm</span><i class="cb"><svg viewBox="0 0 11 11" width="11" height="11"><path d="M2.2 5.4 L4.4 7.8 L8.8 2.8" fill="none" stroke="#222" stroke-width="1.5"/></svg></i><i class="sw" style="background:#9696c8"></i></div>
<div class="row" style="top:223px"><i class="rad"></i><span class="nm">MDF 12mm Special</span><i class="cb"><svg viewBox="0 0 11 11" width="11" height="11"><path d="M2.2 5.4 L4.4 7.8 L8.8 2.8" fill="none" stroke="#222" stroke-width="1.5"/></svg></i><i class="sw" style="background:#fad214"></i></div>
<div class="row" style="top:240px"><i class="rad"></i><span class="nm">MDF 16mm</span><i class="cb"><svg viewBox="0 0 11 11" width="11" height="11"><path d="M2.2 5.4 L4.4 7.8 L8.8 2.8" fill="none" stroke="#222" stroke-width="1.5"/></svg></i><i class="sw" style="background:#fa82aa"></i></div>
<div class="row" style="top:257px"><i class="rad"></i><span class="nm">MDF 16mm Special</span><i class="cb"><svg viewBox="0 0 11 11" width="11" height="11"><path d="M2.2 5.4 L4.4 7.8 L8.8 2.8" fill="none" stroke="#222" stroke-width="1.5"/></svg></i><i class="sw" style="background:#faaa0a"></i></div>
<div class="row" style="top:274px"><i class="rad"></i><span class="nm">MDF 18mm</span><i class="cb"><svg viewBox="0 0 11 11" width="11" height="11"><path d="M2.2 5.4 L4.4 7.8 L8.8 2.8" fill="none" stroke="#222" stroke-width="1.5"/></svg></i><i class="sw" style="background:#78821e"></i></div>
<div class="row" style="top:291px"><i class="rad"></i><span class="nm">MDF 32mm</span><i class="cb"><svg viewBox="0 0 11 11" width="11" height="11"><path d="M2.2 5.4 L4.4 7.8 L8.8 2.8" fill="none" stroke="#222" stroke-width="1.5"/></svg></i><i class="sw" style="background:#0a0ac8"></i></div>
<div class="row" style="top:308px"><i class="rad"></i><span class="nm">Quad 12mm</span><i class="cb"><svg viewBox="0 0 11 11" width="11" height="11"><path d="M2.2 5.4 L4.4 7.8 L8.8 2.8" fill="none" stroke="#222" stroke-width="1.5"/></svg></i><i class="sw" style="background:#780a82"></i></div>
<div class="row" style="top:325px"><i class="rad"></i><span class="nm">Treated Pine 30mm x 40mm</span><i class="cb"><svg viewBox="0 0 11 11" width="11" height="11"><path d="M2.2 5.4 L4.4 7.8 L8.8 2.8" fill="none" stroke="#222" stroke-width="1.5"/></svg></i><i class="sw" style="background:#aa0afa"></i></div></div>
<div class="abs" style="left:0;top:438px;width:262px;height:4px;border-top:1px solid #bdbdbd;border-bottom:1px solid #bdbdbd;background:#e9e9e9"></div>
<div class="abs hdr" style="top:445px;height:18px"><b></b><span>Materials</span><div class="xbtn"><svg width="7" height="7" viewBox="0 0 7 7"><path d="M1 1.5L6 6M6 1.5L1 6" stroke="#222" stroke-width="1.4" fill="none"/></svg></div></div>
<div class="abs" style="left:2px;top:465px;width:66px;height:70px;background:#fbf5dc;border:1px solid #c9c9c9"><div style="position:absolute;left:1px;top:1px;width:63px;height:65px;background:#cc9a0c"></div><div style="position:absolute;right:3px;bottom:4px;width:0;height:0;border-left:7px solid transparent;border-bottom:7px solid #f3ead0"></div></div>
<div class="abs" style="left:72px;top:465px;width:163px;height:18px;background:#fff;border:1px solid #d0d0d0;border-top:2px solid #7d7d7d;border-left:2px solid #7d7d7d"><span style="position:absolute;left:3px;top:1px;">Angle Mitre</span></div>
<svg class="abs" style="left:236px;top:463px" width="28" height="74" viewBox="0 0 28 74"><g transform="translate(3,1.5)"><rect x="6" y="2" width="10.5" height="8.5" fill="#111"/><rect x="8.3" y="5" width="6" height="2.2" fill="#e8e8e8"/><path d="M6.5 16.5H16L11.2 11.8Z" fill="#111"/></g><g transform="translate(3.5,5.5) scale(0.86)"><path d="M5 29L13 23L24 27L23 40L12 45L4 39Z" fill="#1c1c1c"/><path d="M8 28.5L13.5 25L21.5 27.8L15.5 31.5Z" fill="#c9b24a"/><path d="M7 31.5L14.5 35L22.5 30.5" stroke="#eee" stroke-width="1.2" fill="none"/><circle cx="7.5" cy="39.5" r="4.8" fill="#fff" stroke="#111" stroke-width="1.4"/><path d="M4.6 39.5H10.4M7.5 36.6V42.4" stroke="#111" stroke-width="1.4"/></g><g transform="translate(2,-1.5)"><path d="M1 51H23V72Z" fill="#fff"/><path d="M1 51L23 72H1Z" fill="#a9b8c6"/></g></svg>
<div class="abs" style="left:0;top:537px;width:262px;height:1px;background:#b9b9b9"></div>
<div class="abs" style="left:0;top:538px;width:262px;height:1px;background:#fff"></div>
<div class="abs" style="left:6px;top:547px;">Select</div>
<div class="abs" style="left:43px;top:545px;width:2px;height:20px;background:#9a9a9a;border-left:1px solid #fff"></div>
<div class="abs" style="left:48px;top:549px;">Edit</div>
<div class="abs" style="left:45px;top:546px;width:40px;height:1px;background:#fff"></div>
<div class="abs" style="left:84px;top:547px;width:1px;height:17px;background:#8a8a8a"></div>
<div class="abs" style="left:45px;top:564px;width:217px;height:1px;background:#fff"></div>
<svg class="abs" style="left:240px;top:541px" width="22" height="22" viewBox="0 0 22 22"><path d="M3 19.5L4.5 16L11.5 9L13.5 11L6.5 18Z" fill="#c8a25a" stroke="#3a2a10" stroke-width="0.8"/><path d="M11 7.5L15 11.5" stroke="#222" stroke-width="1.6"/><path d="M12.5 9L16 5Q18 3 18.8 4.2Q19.5 5.5 17.8 7L14.5 10.5Z" fill="#222" stroke="#222" stroke-width="1"/></svg>
<svg class="abs" style="left:6px;top:570px" width="70" height="20" viewBox="0 0 70 20"><path d="M2 9.5L9 3V7H15V12H9V16Z" fill="#fff" stroke="#111" stroke-width="1.5" stroke-linejoin="miter"/><path d="M39 9.5L32 3V7H26V12H32V16Z" fill="#f4f4f4" stroke="#a9a9a9" stroke-width="1.3"/><path d="M47 10L56 2L65 10" fill="none" stroke="#111" stroke-width="1.6"/><path d="M49.5 9V17.5H62.5V9" fill="#fff" stroke="#111" stroke-width="1.4"/><rect x="54" y="11" width="4.5" height="6.5" fill="#111"/><rect x="59" y="3" width="2" height="4" fill="#111"/></svg>
<div class="abs dd" style="left:75px;top:572px;width:160px;height:21px"><span>In Model</span><em></em></div>
<svg class="abs" style="left:243px;top:571px" width="16" height="17" viewBox="0 0 16 17"><path d="M5 1.5H9V0.5L15.5 8.5L9 16.5V14H5Z" fill="#111"/><rect x="1.5" y="4" width="8" height="10" fill="#4d6fb3" stroke="#1a2a55" stroke-width="1"/><rect x="3" y="6.5" width="5" height="2" fill="#fff"/><rect x="3" y="10" width="5" height="2" fill="#dfe8ff"/></svg>
<div class="abs swl" style="left:1px;top:595px;width:246px;height:160px;overflow:hidden">
 <div class="sws" style="left:2px;top:-3px"><i style="background:#a9a9a9"></i><u></u></div>
 <div class="sws" style="left:54px;top:-3px"><i style="background:#8f8f8f"></i><u></u></div>
 <div class="sws" style="left:106px;top:-3px"><i style="background:#8f8f8f"></i><u></u></div>
 <div class="sws" style="left:158px;top:-3px"><i style="background:#fde4d0"></i><u class="o"></u></div>
 <div class="sws" style="left:2px;top:49px"><i style="background:#476b17"></i><u></u></div>
 <div class="sws" style="left:54px;top:49px"><i style="background:#fff"></i><u class="o"></u></div>
 <div class="sws" style="left:106px;top:49px"><i style="background:#fff"></i><u class="o"></u></div>
 <div class="sws" style="left:158px;top:49px"><i style="background:#6b4f09"></i></div>
 <div class="sws" style="left:2px;top:101px"><i style="background:#dccf72;filter:url(#woods)"></i><u></u></div>
 <div class="sws" style="left:54px;top:101px"><i style="background:#cd8d6b;filter:url(#woods)"></i><u></u></div>
</div>
<div class="abs sb" style="left:247px;top:595px;width:17px;height:160px"><div class="thumb" style="top:92px;height:16px"></div>
<svg style="position:absolute;left:4px;top:6px" width="9" height="5"><path d="M0 5L4.5 0L9 5Z" fill="#555"/></svg><svg style="position:absolute;left:4px;top:148px" width="9" height="5"><path d="M0 0L4.5 5L9 0Z" fill="#555"/></svg></div>
<div class="abs" style="left:0;top:757px;width:264px;height:3px;background:#8e8e8e;border-top:1px solid #c5c5c5"></div>
<div class="abs" style="left:0;top:762px;width:264px;height:21px;background:#ececec;border-top:1px solid #d0d0d0;border-bottom:1px solid #c4c4c4"><span style="position:absolute;left:3px;top:4px;">Select</span></div>
<svg class="abs" style="left:6px;top:788px" width="70" height="20" viewBox="0 0 70 20"><path d="M2 9.5L9 3V7H15V12H9V16Z" fill="#f4f4f4" stroke="#a9a9a9" stroke-width="1.3"/><path d="M39 9.5L32 3V7H26V12H32V16Z" fill="#f4f4f4" stroke="#a9a9a9" stroke-width="1.3"/><path d="M47 10L56 2L65 10" fill="none" stroke="#111" stroke-width="1.6"/><path d="M49.5 9V17.5H62.5V9" fill="#fff" stroke="#111" stroke-width="1.4"/><rect x="54" y="11" width="4.5" height="6.5" fill="#111"/><rect x="59" y="3" width="2" height="4" fill="#111"/></svg>
<div class="abs dd" style="left:75px;top:789px;width:160px;height:21px"><span>MDF coloured by Size</span><em></em></div>
<svg class="abs" style="left:243px;top:788px" width="16" height="17" viewBox="0 0 16 17"><path d="M5 1.5H9V0.5L15.5 8.5L9 16.5V14H5Z" fill="#111"/><rect x="1.5" y="4" width="8" height="10" fill="#4d6fb3" stroke="#1a2a55" stroke-width="1"/><rect x="3" y="6.5" width="5" height="2" fill="#fff"/><rect x="3" y="10" width="5" height="2" fill="#dfe8ff"/></svg>
<div class="abs swl" style="left:1px;top:813px;width:246px;height:125px;overflow:hidden">
 <div class="sws" style="left:2px;top:1px"><i style="background:#6b4a10;filter:url(#woods)"></i></div>
 <div class="sws" style="left:54px;top:1px"><i style="background:#bf2f12;filter:url(#woods)"></i></div>
 <div class="sws" style="left:106px;top:1px"><i style="background:#d08a68;filter:url(#woods)"></i></div>
 <div class="sws" style="left:158px;top:1px"><i style="background:#b8ae3c;filter:url(#woods)"></i></div>
 <div class="sws" style="left:2px;top:53px"><i style="background:#0e7a35;filter:url(#woods)"></i></div>
 <div class="sws" style="left:54px;top:53px"><i style="background:#1e93a4;filter:url(#woods)"></i></div>
 <div class="sws" style="left:106px;top:53px"><i style="background:#a0189a;filter:url(#woods)"></i></div>
 <div class="sws" style="left:158px;top:53px"><i style="background:#c2c2c2;filter:url(#woods)"></i></div>
 <div class="sws" style="left:2px;top:105px"><i style="background:#cc9a0c"></i></div>
 <div class="sws" style="left:54px;top:105px"><i style="background:#fff"></i></div>
 <div class="sws" style="left:106px;top:105px"><i style="background:#fff"></i></div>
 <div class="sws" style="left:158px;top:105px"><i style="background:#fff"></i></div>
</div>
<div class="abs sb" style="left:247px;top:813px;width:17px;height:125px"><div class="thumb" style="top:17px;height:16px"></div>
<svg style="position:absolute;left:4px;top:6px" width="9" height="5"><path d="M0 5L4.5 0L9 5Z" fill="#555"/></svg></div>
<div class="abs" style="left:10px;top:914px;font-size:11px;white-space:nowrap;color:#111;letter-spacing:-.09px" id="wm">This work is © protected by a member of x-sim.de</div>
</div>
</body></html>
